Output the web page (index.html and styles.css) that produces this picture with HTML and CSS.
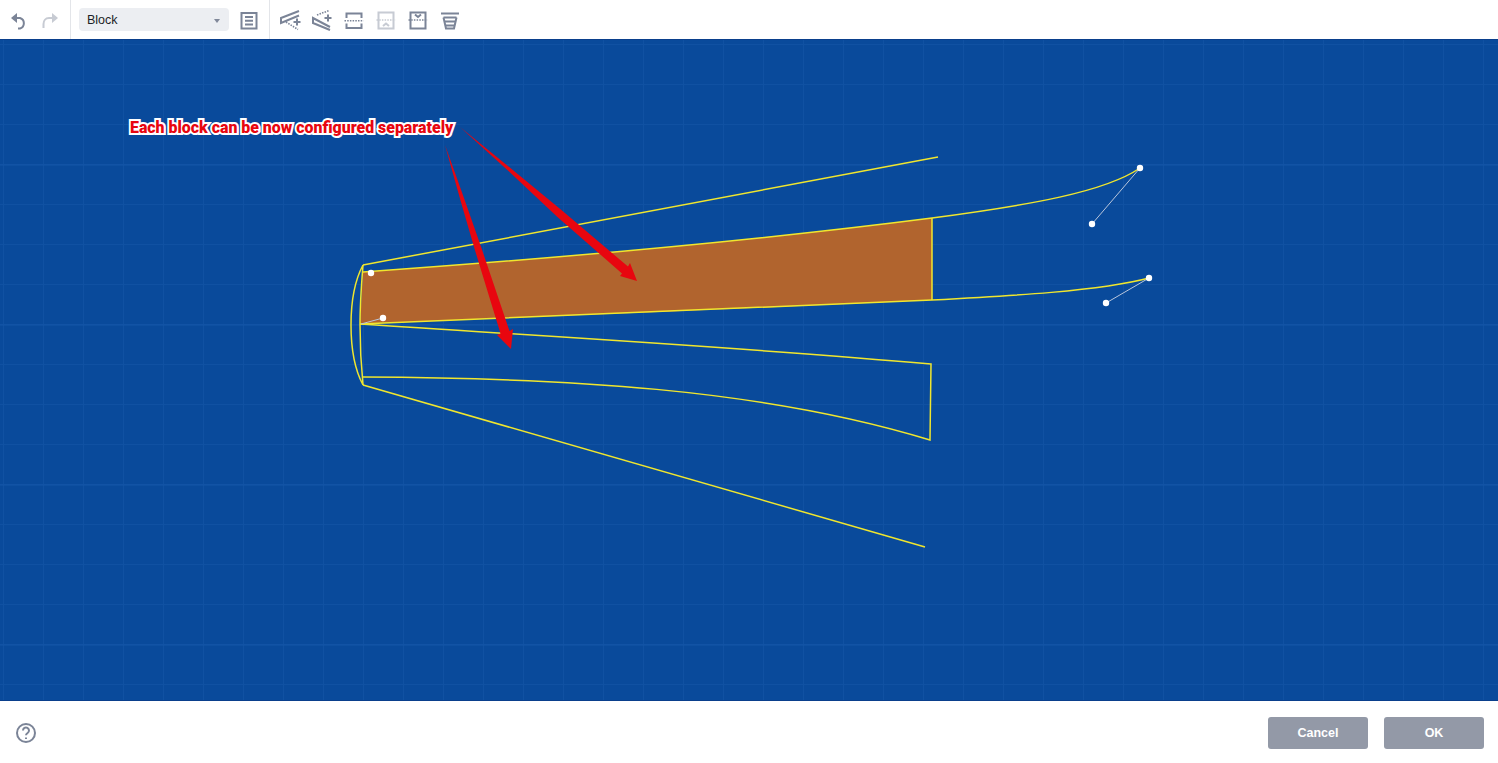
FILE: index.html
```html
<!DOCTYPE html>
<html lang="en">
<head>
<meta charset="utf-8">
<title>Block editor</title>
<link rel="stylesheet" href="styles.css">
</head>
<body>
<div class="app">
  <header class="toolbar">
    <button class="tool" aria-label="Undo"><svg viewBox="0 0 24 24" class="icon"><path d="M5 10 L11 5 L11 15 Z" class="solid"/><path d="M10 10 H14 a5.500 5.500 0 0 1 0 10.500 H12"/></svg></button>
    <button class="tool faded" aria-label="Redo"><svg viewBox="0 0 24 24" class="icon"><path d="M20 10 L14 5 L14 15 Z" class="solid"/><path d="M15 10 H11 C7.500 10 5.500 13 5.500 16 V20"/></svg></button>
    <span class="sep"></span>
    <div class="select"><span>Block</span><i class="caret"></i></div>
    <button class="tool tool-gap" aria-label="Properties"><svg viewBox="0 0 24 24" class="icon"><rect x="4.500" y="5" width="15" height="15.500"/><path d="M8 9h8M8 12.700h8M8 16.400h8"/></svg></button>
    <span class="sep"></span>
    <button class="tool tool-gap" aria-label="Add block before"><svg viewBox="0 0 24 24" class="icon"><path d="M21 3 L3 10 L3 15 L21 7.500"/><path d="M8 14 L20 21.500" class="dots"/><path d="M19 10.500v7M15.500 14h7"/></svg></button>
    <button class="tool" aria-label="Add block after"><svg viewBox="0 0 24 24" class="icon"><path d="M20 19 L3 10 L3 15 L20 22"/><path d="M7 7 L19 2.500" class="dots"/><path d="M18 6.500v7M14.500 10h7"/></svg></button>
    <button class="tool" aria-label="Split block"><svg viewBox="0 0 24 24" class="icon"><path d="M4.500 10V5.500h15V10M4.500 15.500v4.500h15v-4.500"/><path d="M2.500 12.700h19" class="dots"/></svg></button>
    <button class="tool faded" aria-label="Merge up"><svg viewBox="0 0 24 24" class="icon"><path d="M4.500 12V4.500h15V12M4.500 12v8.500h15V12"/><path d="M2.500 12h19" class="dots"/><path d="M9 18 12 15.500l3 2.500"/></svg></button>
    <button class="tool" aria-label="Merge down"><svg viewBox="0 0 24 24" class="icon"><path d="M4.500 12V4.500h15V12M4.500 12v8.500h15V12"/><path d="M2.500 12h19" class="dots"/><path d="M9 6.500 12 9l3-2.500"/></svg></button>
    <button class="tool" aria-label="Delete block"><svg viewBox="0 0 24 24" class="icon"><path d="M3 5.500h18M5.500 9.500h13M7 13.500h10M7.500 17.500h9"/><path d="M5.500 9.500l2.500 11h8l2.500-11"/></svg></button>
  </header>

  <main class="canvas">
    <svg class="drawing" viewBox="0 40 1498 661" preserveAspectRatio="none">
      <defs>
        <pattern id="grid-minor" x="3" y="4" width="40" height="40" patternUnits="userSpaceOnUse">
          <path d="M0.500 0V40M0 0.500H40" class="grid-line"/>
        </pattern>
      </defs>
      <rect x="0" y="40" width="1498" height="661" class="sheet"/>
      <rect x="0" y="40" width="1498" height="661" fill="url(#grid-minor)"/>
      <path d="M0 325H1498M0 165H1498M0 485H1498M0 645H1498" class="grid-major"/>
      <path d="M0 700.500H1498" class="edge"/>

      <path d="M363 272 C560 258 760 240 932 218 L932 300 C720 310 530 317 360 324 Z" class="fill"/>
      <g class="wire">
        <path d="M363 265 L938 157"/>
        <path d="M363 385 L925 547"/>
        <path d="M363 265 C347 295 347 355 363 385"/>
        <path d="M363 265 C361 290 360 305 360 325 C360 345 361 365 363 385"/>
        <path d="M363 272 C560 258 760 240 932 218 C1030 205 1105 192 1140 168"/>
        <path d="M360 324 C530 317 720 310 932 300 C1010 296 1100 291 1149 278"/>
        <path d="M932 218 V300"/>
        <path d="M360 324 C540 336 740 347 931 364 L930 440 C760 388 560 378 363 377"/>
      </g>
      <g class="handles">
        <path d="M1140 168 L1092 224M1149 278 L1106 303M361 324 L383 318" class="handle-line"/>
        <circle cx="371" cy="273" r="3.200"/>
        <circle cx="383" cy="318" r="3.200"/>
        <circle cx="1140" cy="168" r="3.200"/>
        <circle cx="1092" cy="224" r="3.200"/>
        <circle cx="1149" cy="278" r="3.200"/>
        <circle cx="1106" cy="303" r="3.200"/>
      </g>
      <path d="M460 127 L511 168.500 L562.600 211 L628 266.600 L630 263 L637 281 L620 276 L622 273.400 L557.400 217 L509 171.500 Z" class="arrow"/>
      <path d="M445 145 L464.500 199.500 L481.800 249 L509.500 331 L513 329 L511 349 L497 335 L500.500 333.500 L475.200 251 L460.500 200.500 Z" class="arrow"/>
    </svg>
    <div class="note">Each block can be now configured separately</div>
  </main>

  <footer class="footer">
    <svg viewBox="0 0 24 24" class="help" aria-label="Help"><circle cx="12" cy="12" r="9"/><path d="M9 9.500a3 3 0 1 1 4.600 2.500c-1 .7-1.600 1.200-1.600 2.300"/><path d="M12 16.500v1.500" class="dot"/></svg>
    <div class="actions">
      <button class="btn">Cancel</button>
      <button class="btn">OK</button>
    </div>
  </footer>
</div>
</body>
</html>
```
FILE: styles.css
```css
* { box-sizing: border-box; }
html, body { margin: 0; padding: 0; height: 100%; background: #fff; overflow: hidden; }
body { font-family: "Liberation Sans", Arial, sans-serif; }
.app { display: flex; flex-direction: column; height: 763px; }

.toolbar { display: flex; align-items: center; height: 39px; padding-left: 2px; background: #fff; flex: none; }
.tool { width: 32px; height: 32px; border: 0; padding: 4px; background: none; display: flex; align-items: center; justify-content: center; }
.tool-gap { margin-left: 4px; }
.tool.faded { opacity: .42; }
.icon { width: 24px; height: 24px; fill: none; stroke: #7b8497; stroke-width: 2; }
.icon .solid { fill: #7b8497; stroke: none; }
.icon .dots { stroke-width: 1.600; stroke-dasharray: 1.500 1.200; }
.sep { width: 1px; height: 39px; background: #e3e5e9; margin-left: 4px; }
.select { width: 150px; height: 23px; margin-left: 8px; border-radius: 4px; background: #eceef2; display: flex; align-items: center; justify-content: space-between; padding: 0 9px 0 8px; font-size: 12.500px; color: #1c1f26; }
.caret { width: 0; height: 0; border-left: 3px solid transparent; border-right: 3px solid transparent; border-top: 4px solid #80889a; margin-top: 2px; }

.canvas { position: relative; flex: 1; min-height: 0; border-top: 1px solid #0a3f8c; }
.drawing { display: block; width: 100%; height: 100%; }
.sheet { fill: #094a9b; }
.grid-line { fill: none; stroke: #1051a2; stroke-width: 1; }
.grid-major { fill: none; stroke: #1456a8; stroke-width: 1; }
.edge { fill: none; stroke: #0a3f8c; stroke-width: 1; }
.fill { fill: #b1642e; }
.wire { fill: none; stroke: #f0e62e; stroke-width: 1.500; }
.handles circle { fill: #fff; }
.handle-line { fill: none; stroke: #b9c6dc; stroke-width: 1; }
.arrow { fill: #e8060f; }
.note { position: absolute; left: 130px; top: 78px; font-family: "Roboto", sans-serif; font-weight: 900; font-size: 15.900px; line-height: 20px; color: #e8060f; -webkit-text-stroke: 4px #fff; paint-order: stroke fill; white-space: nowrap; }

.footer { display: flex; align-items: center; justify-content: space-between; height: 62px; padding: 2px 14px 0; background: #fff; flex: none; }
.help { width: 24px; height: 24px; fill: none; stroke: #7b8497; stroke-width: 2; }
.actions { display: flex; gap: 16px; }
.btn { width: 100px; height: 32px; border: 0; border-radius: 3px; background: #9399a7; color: #fff; font: 700 12.500px "Liberation Sans", Arial, sans-serif; }
```
